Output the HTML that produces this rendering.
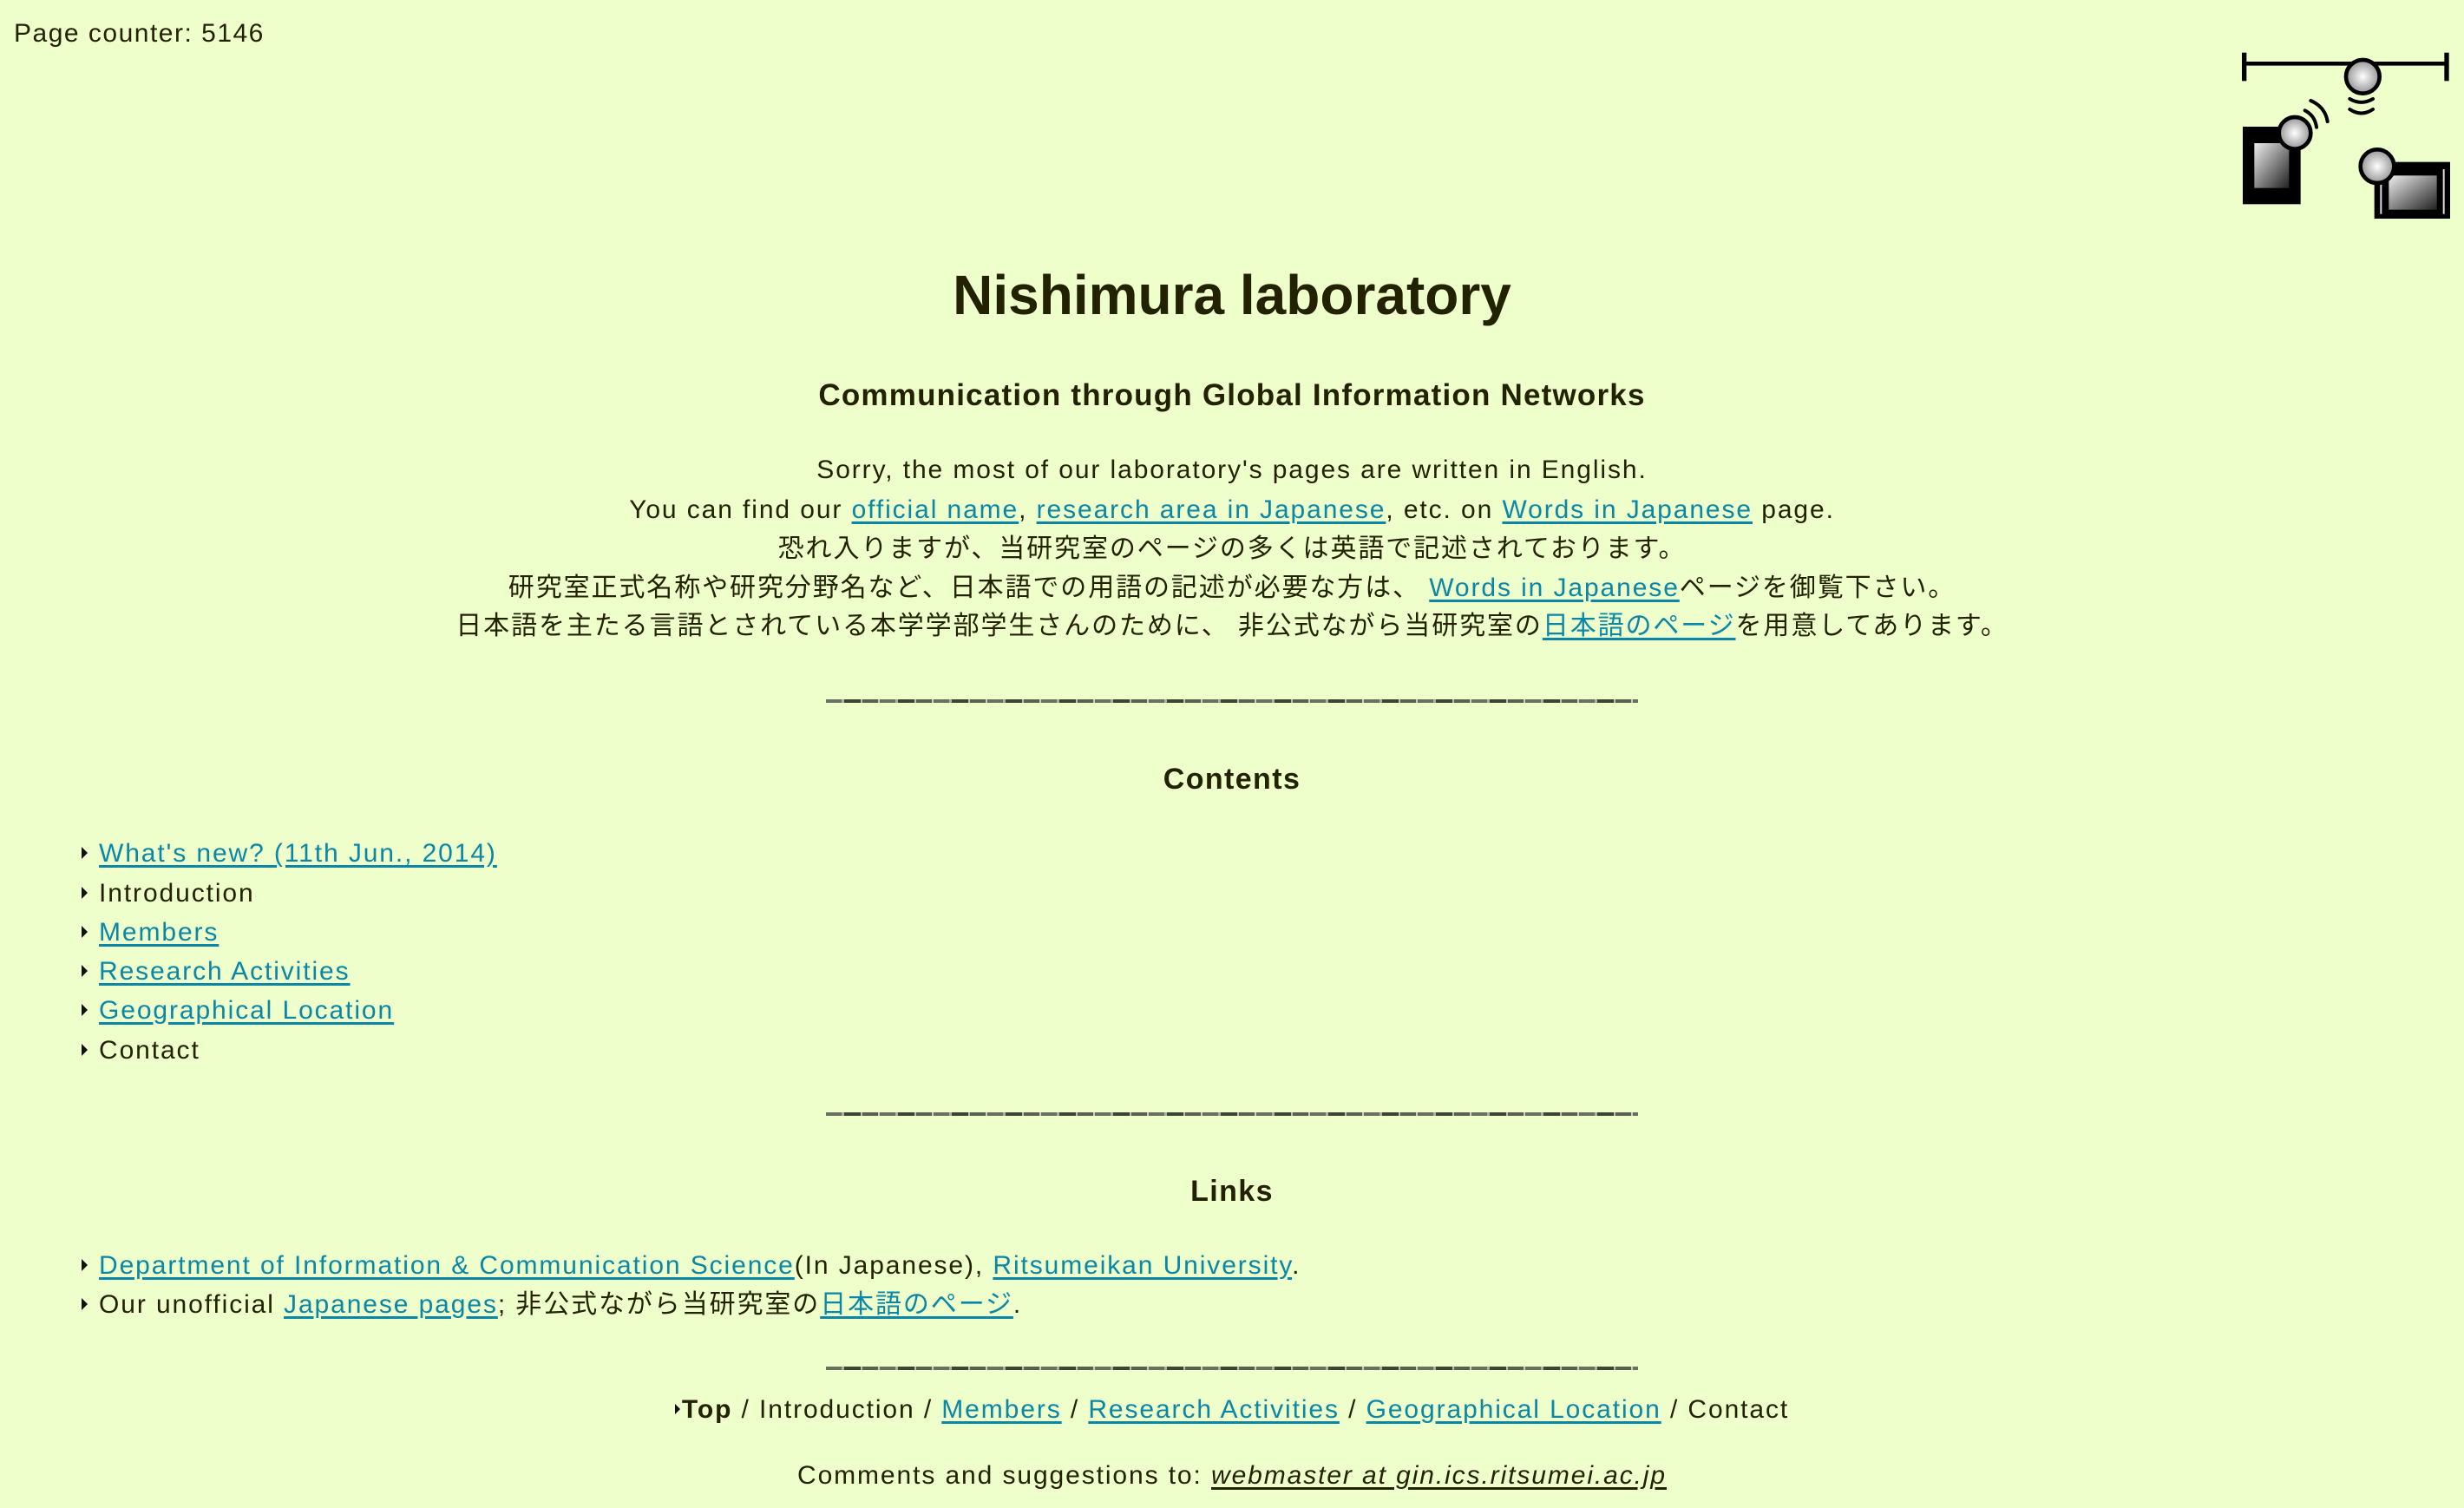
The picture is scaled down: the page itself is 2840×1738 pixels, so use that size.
<!DOCTYPE html>
<html><head><meta charset="utf-8">
<style>
html,body{margin:0;padding:0}
body{width:2840px;height:1738px;background:#eeffcc;color:#222200;font-family:"Liberation Sans","Noto Sans CJK JP",sans-serif;font-size:30px;letter-spacing:1.9px;position:relative;overflow:hidden}
a{color:#0a86a6;text-decoration:underline;text-decoration-thickness:3px;text-underline-offset:4px}
.l{position:absolute;left:0;width:2840px;text-align:center;line-height:45px;height:45px;white-space:nowrap}
.b{font-weight:bold}
.li{position:absolute;left:94px;line-height:45px;height:45px;white-space:nowrap}
.tri{display:inline-block;width:0;height:0;border-top:7px solid transparent;border-bottom:7px solid transparent;border-left:7px solid #111;margin-right:13px;vertical-align:middle;position:relative;top:-2px}
.hr{position:absolute;left:952px;width:936px;height:4px;background:repeating-linear-gradient(90deg,#6a7060 0 18px,#a8b098 18px 21px,#3c4434 21px 40px,#b8c0a8 40px 42px,#59604f 42px 60px,#c8d0b8 60px 62px)}
</style></head><body>
<div style="position:absolute;left:16px;top:16px;line-height:45px;font-size:30px;letter-spacing:1.5px">Page counter: 5146</div>

<svg style="position:absolute;left:2560px;top:40px" width="280" height="230" viewBox="0 0 840 690">
<defs>
<radialGradient id="g" cx="0.5" cy="0.5" r="0.55"><stop offset="0" stop-color="#fff"/><stop offset="1" stop-color="#8a8a8a"/></radialGradient>
<linearGradient id="h" x1="0" y1="0" x2="1" y2="1"><stop offset="0" stop-color="#eee"/><stop offset="1" stop-color="#222"/></linearGradient>
</defs>
<line x1="80" y1="100" x2="780" y2="100" stroke="#000" stroke-width="14"/>
<line x1="80" y1="62" x2="80" y2="160" stroke="#000" stroke-width="16"/>
<line x1="780" y1="62" x2="780" y2="160" stroke="#000" stroke-width="16"/>
<circle cx="490" cy="145" r="58" fill="url(#g)" stroke="#000" stroke-width="14"/>
<path d="M445 222 Q485 245 525 222" fill="none" stroke="#000" stroke-width="12" stroke-linecap="round"/>
<path d="M445 258 Q485 285 525 258" fill="none" stroke="#000" stroke-width="12" stroke-linecap="round"/>
<rect x="75" y="318" width="200" height="268" fill="#000"/>
<rect x="115" y="375" width="120" height="155" fill="url(#h)"/>
<circle cx="255" cy="340" r="55" fill="url(#g)" stroke="#000" stroke-width="14"/>
<path d="M290 262 Q325 280 330 320" fill="none" stroke="#000" stroke-width="12" stroke-linecap="round"/>
<path d="M310 228 Q360 250 368 300" fill="none" stroke="#000" stroke-width="12" stroke-linecap="round"/>
<rect x="530" y="440" width="262" height="196" fill="#000"/>
<rect x="580" y="487" width="166" height="118" fill="url(#h)"/>
<line x1="770" y1="465" x2="770" y2="620" stroke="#ddd" stroke-width="6"/>
<line x1="553" y1="510" x2="553" y2="620" stroke="#ddd" stroke-width="6"/>
<circle cx="540" cy="455" r="58" fill="url(#g)" stroke="#000" stroke-width="14"/>
</svg>

<div class="l" style="top:305px;height:70px;line-height:70px;font-size:64px;font-weight:600;letter-spacing:0">Nishimura laboratory</div>
<div class="l b" style="top:433px;font-size:35px;letter-spacing:1.2px">Communication through Global Information Networks</div>
<div class="l" style="top:519px">Sorry, the most of our laboratory's pages are written in English.</div>
<div class="l" style="top:565px">You can find our <a>official name</a>, <a>research area in Japanese</a>, etc. on <a>Words in Japanese</a> page.</div>
<div class="l" style="top:610px">恐れ入りますが、当研究室のページの多くは英語で記述されております。</div>
<div class="l" style="top:655px">研究室正式名称や研究分野名など、日本語での用語の記述が必要な方は、 <a>Words in Japanese</a>ページを御覧下さい。</div>
<div class="l" style="top:699px">日本語を主たる言語とされている本学学部学生さんのために、 非公式ながら当研究室の<a>日本語のページ</a>を用意してあります。</div>
<div class="hr" style="top:806px"></div>
<div class="l b" style="top:876px;font-size:34px;letter-spacing:1.4px">Contents</div>
<div class="li" style="top:961px"><span class="tri"></span><a>What's new? (11th Jun., 2014)</a></div>
<div class="li" style="top:1007px"><span class="tri"></span>Introduction</div>
<div class="li" style="top:1052px"><span class="tri"></span><a>Members</a></div>
<div class="li" style="top:1097px"><span class="tri"></span><a>Research Activities</a></div>
<div class="li" style="top:1142px"><span class="tri"></span><a>Geographical Location</a></div>
<div class="li" style="top:1188px"><span class="tri"></span>Contact</div>
<div class="hr" style="top:1282px"></div>
<div class="l b" style="top:1351px;font-size:34px;letter-spacing:1.4px">Links</div>
<div class="li" style="top:1436px"><span class="tri"></span><a>Department of Information &amp; Communication Science</a>(In Japanese), <a>Ritsumeikan University</a>.</div>
<div class="li" style="top:1481px"><span class="tri"></span>Our unofficial <a>Japanese pages</a>; 非公式ながら当研究室の<a>日本語のページ</a>.</div>
<div class="hr" style="top:1575px"></div>
<div class="l" style="top:1602px"><span class="tri" style="margin-right:2px;border-left-width:6px;border-top-width:6px;border-bottom-width:6px"></span><b>Top</b> / Introduction / <a>Members</a> / <a>Research Activities</a> / <a>Geographical Location</a> / Contact</div>
<div class="l" style="top:1678px">Comments and suggestions to: <i style="text-decoration:underline;text-decoration-thickness:3px;text-underline-offset:4px">webmaster at gin.ics.ritsumei.ac.jp</i></div>
</body></html>
